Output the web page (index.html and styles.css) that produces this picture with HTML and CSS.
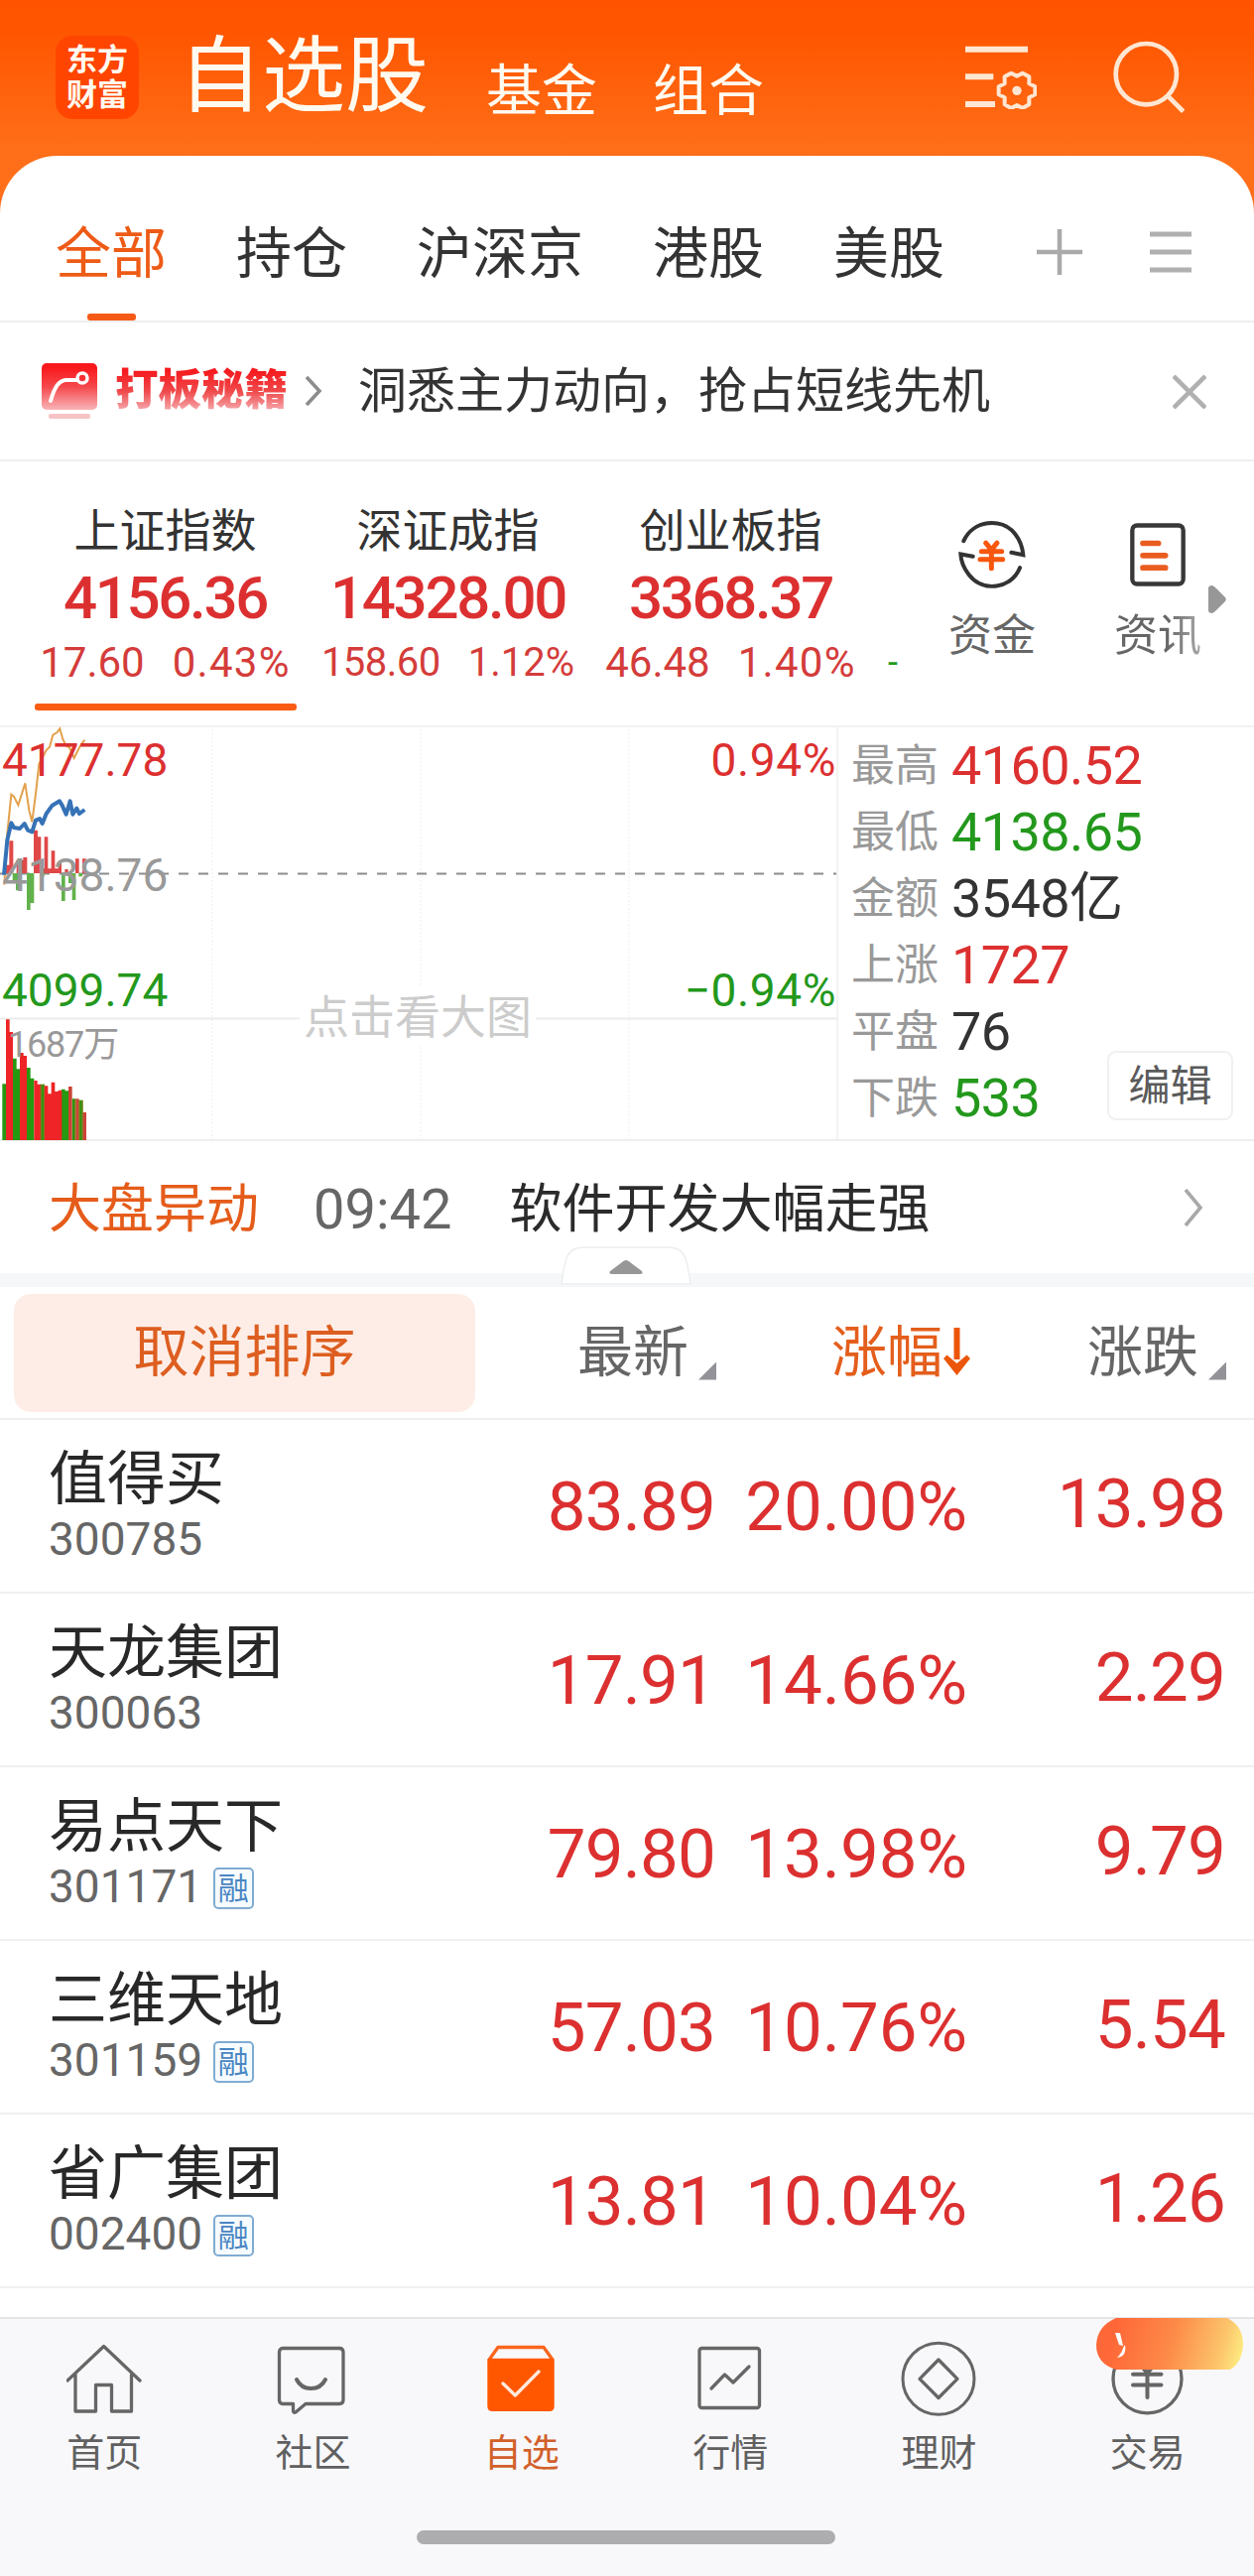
FILE: index.html
```html
<!DOCTYPE html>
<html lang="zh-CN">
<head>
<meta charset="utf-8">
<title>自选股</title>
<link rel="stylesheet" href="styles.css">
</head>
<body>
<div class="app">
  <header class="topbar">
    <div class="logo"><span>东方</span><span>财富</span></div>
    <h1 class="topbar-title">自选股</h1>
    <span class="topbar-link">基金</span>
    <span class="topbar-link">组合</span>
    <svg class="icon-manage" viewBox="39 46 216 192" fill="none" stroke="#ffe6d2">
      <path d="M39 57H228M39 140H124M39 223H129" stroke-width="18"/>
      <path d="M250 170V194L232 203 232 224 212 235 195 226 178 235 158 224 158 203 140 194V170L158 161 158 140 178 129 195 138 212 129 232 140 232 161Z" stroke-width="12" stroke-linejoin="round"/>
      <circle cx="195" cy="182" r="14" fill="#ffe6d2" stroke="none"/>
    </svg>
    <svg class="icon-search" viewBox="485 29 216 219" fill="none" stroke="#ffe6d2" stroke-width="14">
      <circle cx="585" cy="130" r="92"/>
      <path d="M650 196L697 243"/>
    </svg>
  </header>

  <main class="sheet">
    <nav class="tabs">
      <span class="tab tab-active">全部</span>
      <span class="tab">持仓</span>
      <span class="tab">沪深京</span>
      <span class="tab">港股</span>
      <span class="tab">美股</span>
      <svg class="icon-plus" viewBox="0 0 46 46" stroke="#aaa" stroke-width="4.5"><path d="M0 23H46M23 0V46"/></svg>
      <svg class="icon-menu" viewBox="0 0 42 42" stroke="#b0b0b0" stroke-width="5"><path d="M0 3H42M0 21H42M0 39H42"/></svg>
    </nav>

    <section class="promo">
      <svg class="promo-icon" viewBox="0 0 56 56" fill="none">
        <defs><linearGradient id="promoFill" x1="0" y1="0" x2="0" y2="1"><stop offset="0.1" stop-color="#f9191c"/><stop offset="0.5" stop-color="#f5474a"/><stop offset="1" stop-color="#f8b4b8"/></linearGradient></defs>
        <rect x="0" y="0" width="56" height="47" rx="5" fill="url(#promoFill)"/>
        <path d="M9 38C13 24 17 18 24 17H36" stroke="#fff" stroke-width="4" stroke-linecap="round"/>
        <circle cx="41" cy="15" r="5" stroke="#fff" stroke-width="3.5"/>
        <rect x="7" y="51" width="42" height="5" rx="2" fill="#f7c3c6"/>
      </svg>
      <strong class="promo-name">打板秘籍</strong>
      <svg class="promo-arrow" viewBox="0 0 18 32" fill="none" stroke="#8c8c8c" stroke-width="3.6"><path d="M2 2L15 16 2 30"/></svg>
      <span class="promo-text">洞悉主力动向，抢占短线先机</span>
      <svg class="promo-close" viewBox="0 0 34 34" stroke="#b0b0b0" stroke-width="4.5"><path d="M1 1L33 33M33 1L1 33"/></svg>
    </section>

    <section class="indices">
      <div class="index index-active">
        <span class="index-name">上证指数</span>
        <span class="index-value">4156.36</span>
        <span class="index-change"><span>17.60</span><span class="pct">0.43%</span></span>
      </div>
      <div class="index">
        <span class="index-name">深证成指</span>
        <span class="index-value">14328.00</span>
        <span class="index-change index-change-tight"><span>158.60</span><span class="pct">1.12%</span></span>
      </div>
      <div class="index">
        <span class="index-name">创业板指</span>
        <span class="index-value">3368.37</span>
        <span class="index-change"><span>46.48</span><span class="pct">1.40%</span></span>
      </div>
      <div class="index-next">-</div>
      <div class="shortcut">
        <svg width="68" height="69" viewBox="80 42 204 206" fill="none" stroke="#333" stroke-width="12">
          <path d="M96 105C124 42 210 32 252 84C266 102 274 124 276 147L240 140M266 186C240 250 155 262 112 207C97 188 88 168 87 145L124 152" stroke-linecap="round" stroke-linejoin="miter"/>
          <path d="M163 111L180 132 197 111M150 137H211M146 161H214M180 132V188" stroke="#f8570e" stroke-width="15" stroke-linecap="round"/>
        </svg>
        <span>资金</span>
      </div>
      <div class="shortcut shortcut-fade">
        <svg width="56" height="69" viewBox="596 42 168 206" fill="none">
          <rect x="603" y="58" width="154" height="177" rx="14" stroke="#383838" stroke-width="13"/>
          <path d="M635 112H682M635 149H703M635 186H703" stroke="#ea5d20" stroke-width="17" stroke-linecap="round"/>
        </svg>
        <span>资讯</span>
      </div>
      <svg class="indices-more" viewBox="0 0 18 28" fill="#979797"><path d="M0 3Q0 0 4 0Q6 1 8 3L17 12Q18.500 14 17 16L8 25Q6 27 4 28Q0 28 0 25Z"/></svg>
    </section>

    <section class="market">
      <div class="chart">
        <svg class="chart-plot" viewBox="0 0 844 418" fill="none">
          <path d="M214 4V418M424 4V418M634 4V418" stroke="#eeeeee" stroke-width="1" stroke-dasharray="2 2"/>
          <path d="M0 295.500H844" stroke="#ececec" stroke-width="2"/>
          <path d="M0 149.500H844" stroke="#8c8c8c" stroke-width="2" stroke-dasharray="10 10"/>
          <g transform="scale(.333333) translate(0 -33)">
            <path fill="#e04848" d="M17 480V455H28V382H40V480M50 480V440H70V432H82V480M102 480V350H114V370H124V466H134V370H145V466H155V412H166V466H176V450H186V480M196 480V468H206V480M228 480V436H239V480M249 480V436H260V480Z"/>
            <path fill="#62b24b" d="M38 480V502H48V532H59V480M81 480V591H92V570H103V480M124 480V490H134V480M186 480V564H197V480M207 480V510H218V561H229V480M238 480V490H249V480Z"/>
            <path stroke="#e3a14c" stroke-width="6" d="M13 515L20 380 34 242 42 248 55 274 76 208 88 290 97 325 108 240 118 150 140 108 150 98 160 62 172 55 181 43 190 75 200 95 210 100 224 132 240 100 250 85 256 77"/>
            <path stroke="#3672b6" stroke-width="12" stroke-linejoin="round" d="M12 485L22 380 34 328 42 342 60 345 74 330 84 350 97 355 108 320 120 315 128 330 140 300 158 275 180 262 188 275 200 302 212 262 220 302 232 284 240 300 256 288"/>
            <path fill="#259a10" d="M7 1287V1117H18V1287M39 1287V1040H50V1072H60V1287M81 1287V1068H92V1100H103V1287M123 1287V1118H135V1287M186 1287V1133H197V1138H208V1287M218 1287V1162H229V1287M239 1287V1166H250V1287Z"/>
            <path fill="#ee2426" d="M18 1287V922H29V960H39V1287M60 1287V1023H71V1032H81V1287M103 1287V1107H113V1118H124V1287M134 1287V1123H145V1147H155V1112H166V1140H176V1136H187V1287Z"/>
            <path fill="#cb4334" d="M207 1287V1125H218V1287M229 1287V1162H239V1287M250 1287V1203H261V1287Z"/>
            <path stroke="#7f7a1c" stroke-width="4" d="M124 1118V1287M133 1118V1287M227 1162V1287M240 1166V1287M249 1166V1287"/>
          </g>
        </svg>
        <div class="chart-row up"><span>4177.78</span><span class="chart-pct">0.94%</span></div>
        <div class="chart-row flat"><span>4138.76</span></div>
        <div class="chart-row down"><span>4099.74</span><span class="chart-pct">−0.94%</span></div>
        <span class="chart-hint">点击看大图</span>
        <span class="chart-volume">1687万</span>
      </div>
      <div class="stats">
        <div class="stat"><span class="stat-label">最高</span><span class="up">4160.52</span></div>
        <div class="stat"><span class="stat-label">最低</span><span class="down">4138.65</span></div>
        <div class="stat"><span class="stat-label">金额</span><span>3548亿</span></div>
        <div class="stat"><span class="stat-label">上涨</span><span class="up">1727</span></div>
        <div class="stat"><span class="stat-label">平盘</span><span>76</span></div>
        <div class="stat"><span class="stat-label">下跌</span><span class="down">533</span></div>
        <span class="edit">编辑</span>
      </div>
    </section>

    <section class="news">
      <span class="news-tag">大盘异动</span>
      <span class="news-time">09:42</span>
      <span class="news-text">软件开发大幅走强</span>
      <svg class="news-arrow" viewBox="0 0 20 38" fill="none" stroke="#a8a8a8" stroke-width="3.600"><path d="M2 1L17 19 2 37"/></svg>
    </section>
    <div class="divider">
      <svg class="divider-handle" viewBox="0 0 132 40">
        <path d="M1 38C3 24 4 14 8 8C12 2 18 1 26 1H106C114 1 120 2 124 8C128 14 129 24 131 38Z" fill="#fff" stroke="#eceef0" stroke-width="1.500"/>
        <path d="M66 14Q68 14 70 16L82 25Q84 28 80 28H52Q48 28 50 25L62 16Q64 14 66 14Z" fill="#979797"/>
      </svg>
    </div>

    <section class="quotes">
      <div class="quote-head">
        <span class="unsort">取消排序</span>
        <span class="head-cell">最新<i class="corner"></i></span>
        <span class="head-cell head-sorted">涨幅<svg class="sort-arrow" viewBox="0 0 27 48"><path d="M10.500 0H16.500V32H10.500ZM0 31L3.500 27.500 13.500 36 23.500 27.500 27 31 13.500 48Z" fill="#ec560a"/></svg></span>
        <span class="head-cell">涨跌<i class="corner"></i></span>
      </div>
      <div class="quote"><div class="stock"><span class="stock-name">值得买</span><span class="stock-code">300785</span></div><span class="num">83.89</span><span class="num num-pct">20.00%</span><span class="num num-diff">13.98</span></div>
      <div class="quote"><div class="stock"><span class="stock-name">天龙集团</span><span class="stock-code">300063</span></div><span class="num">17.91</span><span class="num num-pct">14.66%</span><span class="num num-diff">2.29</span></div>
      <div class="quote"><div class="stock"><span class="stock-name">易点天下</span><span class="stock-code">301171<b class="margin-tag">融</b></span></div><span class="num">79.80</span><span class="num num-pct">13.98%</span><span class="num num-diff">9.79</span></div>
      <div class="quote"><div class="stock"><span class="stock-name">三维天地</span><span class="stock-code">301159<b class="margin-tag">融</b></span></div><span class="num">57.03</span><span class="num num-pct">10.76%</span><span class="num num-diff">5.54</span></div>
      <div class="quote"><div class="stock"><span class="stock-name">省广集团</span><span class="stock-code">002400<b class="margin-tag">融</b></span></div><span class="num">13.81</span><span class="num num-pct">10.04%</span><span class="num num-diff">1.26</span></div>
    </section>
  </main>

  <footer class="dock">
    <nav class="dock-items">
      <span class="dock-item">
        <svg viewBox="0 0 76 76"><path d="M1 40L37.600 5.500 74 40M9 34V71H29.500V44.500H45.500V71H65.500V34"/></svg>首页
      </span>
      <span class="dock-item">
        <svg viewBox="0 0 76 76"><path d="M8 7.500H65Q69 7.500 69 11.500V59.500Q69 63.500 65 63.500H31L21 72Q18.500 73 18.500 70V63.500H8Q4.500 63.500 4.500 59.500V11.500Q4.500 7.500 8 7.500Z"/><path d="M22 39C28 51 45 51 51 39" stroke-width="4"/></svg>社区
      </span>
      <span class="dock-item dock-active">
        <svg viewBox="0 0 76 76"><path d="M5 19L14 6.500H60L69 19" stroke="#f9651c"/><path d="M3.300 20Q3.300 17.700 6 17.700H68Q70.700 17.700 70.700 20V66Q70.700 71 65.700 71H8.300Q3.300 71 3.300 66Z" fill="#ff5600" stroke="none"/><path d="M19 43L31.300 55 55 31" stroke="#ffe9dc"/></svg>自选
      </span>
      <span class="dock-item">
        <svg viewBox="0 0 76 76"><rect x="7" y="7.500" width="60.500" height="60" rx="2.500"/><path d="M19 48L32.500 34 41 42 57 26"/></svg>行情
      </span>
      <span class="dock-item">
        <svg viewBox="0 0 76 76"><circle cx="38" cy="38.300" r="36" stroke-width="3"/><path d="M38 19L57 38.300 38 57.500 19 38.300Z"/></svg>理财
      </span>
      <span class="dock-item">
        <svg viewBox="0 0 76 76"><circle cx="37.500" cy="38.300" r="34.500"/><path d="M23 33.700H51.500M23 44.500H51.500M37.500 57V33.700M27 20L37.500 32.500 48 20" stroke-width="4"/></svg>交易
        <svg class="dock-badge" viewBox="0 0 148 52">
          <defs><linearGradient id="badgeFill" x1="0" y1="0.500" x2="1" y2="0.600"><stop offset="0.100" stop-color="#fe6838"/><stop offset="0.500" stop-color="#fd8a48"/><stop offset="0.860" stop-color="#fcc56c"/><stop offset="1" stop-color="#fdeb80"/></linearGradient></defs>
          <path d="M20 0H132Q148 8 148 27Q147 45 135 52H20Q0 46 0 27Q1 8 20 0Z" fill="url(#badgeFill)"/>
          <path d="M19 15H24L27 28 23 27ZM29 27Q31 39 21 40Q26 35 27 30Z" fill="#fff"/>
        </svg>
      </span>
    </nav>
    <div class="home-bar"></div>
  </footer>
</div>
</body>
</html>
```
FILE: styles.css
```css
* { box-sizing: border-box; }

body {
  margin: 0;
  font-family: Roboto, "Noto Sans CJK SC", sans-serif;
  color: #333;
}

svg { display: block; flex: none; }

.app {
  display: flex;
  flex-direction: column;
  width: 1264px;
  height: 2596px;
  overflow: hidden;
  background: linear-gradient(#ff5300 0, #ff5500 30px, #ff6e18 150px, #ff701c 240px);
}

.up { color: #dc3030; }
.down { color: #23981c; }

/* Top bar */
.topbar {
  display: flex;
  align-items: center;
  flex: none;
  height: 157px;
  padding: 0 70px 2px 56px;
  color: #fffaf0;
}
.logo {
  display: flex;
  flex-direction: column;
  align-items: center;
  justify-content: center;
  width: 84px;
  height: 84px;
  border-radius: 17px;
  background: #ff4500;
  font-size: 31px;
  font-weight: 700;
  line-height: 35px;
}
.topbar-title {
  margin: 0 0 0 40px;
  font-size: 84px;
  font-weight: 400;
  line-height: 90px;
}
.topbar-link {
  margin: 28px 0 0 58px;
  font-size: 56px;
  line-height: 60px;
}
.topbar-link + .topbar-link { margin-left: 56px; }
.icon-manage { width: 72px; height: 64px; margin-left: auto; }
.icon-search { width: 72px; height: 73px; margin-left: 77px; }

/* White sheet */
.sheet {
  display: flex;
  flex-direction: column;
  flex: 1;
  border-radius: 58px 58px 0 0;
  background: #fff;
}

.tabs {
  display: flex;
  gap: 70px;
  height: 168px;
  padding-left: 56px;
  border-bottom: 2px solid #eeeeee;
}
.tab {
  display: flex;
  flex-direction: column;
  align-items: center;
  padding-top: 71px;
  font-size: 56px;
  line-height: 56px;
}
.tab-active { color: #ee5b16; }
.tab-active::after {
  content: "";
  width: 49px;
  height: 7px;
  margin-top: 32px;
  border-radius: 3px;
  background: #f55a16;
}
.icon-plus { width: 46px; height: 46px; margin: 74px 0 0 23px; }
.icon-menu { width: 42px; height: 42px; margin: 76px 0 0 -2px; }

.promo {
  display: flex;
  align-items: center;
  height: 140px;
  padding-left: 42px;
  border-bottom: 2px solid #eeeeee;
}
.promo-icon { width: 56px; height: 56px; }
.promo-name {
  margin-left: 18px;
  font-size: 43.5px;
  font-weight: 900;
  line-height: 50px;
  color: transparent;
  background: linear-gradient(#f51a1e 10%, #f0484a 50%, #f6b6ba 95%);
  background-clip: text;
  -webkit-background-clip: text;
}
.promo-arrow { width: 18px; height: 32px; margin-left: 17px; }
.promo-text { margin: 2px 0 0 36px; font-size: 49px; line-height: 60px; }
.promo-close { width: 34px; height: 34px; margin: 2px 48px 0 auto; }

/* Index strip */
.indices {
  position: relative;
  display: flex;
  height: 266px;
  padding: 40px 0 0 24px;
}
.index {
  display: flex;
  flex-direction: column;
  align-items: center;
  width: 285px;
}
.index-name { font-size: 46px; line-height: 60px; }
.index-value {
  margin-top: 3px;
  font-size: 60px;
  font-weight: 500;
  line-height: 70px;
  letter-spacing: -2.3px;
  color: #dc3030;
}
.index-change {
  display: flex;
  gap: 28px;
  margin-top: 5px;
  font-size: 42px;
  line-height: 50px;
  color: #d43c3a;
}
.index-change .pct { letter-spacing: 1.3px; }
.index-change-tight { font-size: 40px; letter-spacing: -0.5px; }
.index-change-tight .pct { letter-spacing: 0; }
.index-active::after {
  content: "";
  width: 264px;
  height: 7px;
  margin-top: 16px;
  border-radius: 3px;
  background: #f95c12;
}
.index-next {
  width: 37px;
  padding: 138px 0 0 16px;
  font-size: 36px;
  line-height: 50px;
  color: #23981c;
}
.shortcut {
  display: flex;
  flex-direction: column;
  align-items: center;
  gap: 23px;
  width: 168px;
  padding-top: 19px;
  font-size: 44px;
  line-height: 50px;
  color: #666;
}
.shortcut-fade { width: 166px; }
.shortcut-fade span {
  color: transparent;
  background: linear-gradient(90deg, #666 60%, #aaa);
  background-clip: text;
  -webkit-background-clip: text;
}
.indices-more { position: absolute; right: 28px; top: 125px; width: 18px; height: 28px; }

/* Intraday chart and statistics */
.market {
  display: flex;
  height: 419px;
  border-top: 2px solid #f2f2f2;
  border-bottom: 2px solid #eeeeee;
}
.chart {
  position: relative;
  display: flex;
  flex-direction: column;
  justify-content: space-between;
  width: 843px;
  padding: 3px 0 0 2px;
  height: 295px;
}
.chart-plot { position: absolute; left: 0; top: -2px; width: 844px; height: 418px; }
.chart-row {
  position: relative;
  display: flex;
  justify-content: space-between;
  height: 60px;
  font-size: 46px;
  line-height: 60px;
}
.chart-pct { letter-spacing: 0.6px; }
.flat { color: #999; }
.chart-hint {
  position: absolute;
  left: 302px;
  top: 262px;
  width: 238px;
  font-size: 46px;
  line-height: 60px;
  text-align: center;
  color: #ccc;
  background: #fff;
}
.chart-volume {
  position: absolute;
  left: 8px;
  top: 295px;
  font-size: 36px;
  line-height: 50px;
  letter-spacing: -1.2px;
  color: #999;
}
.stats {
  position: relative;
  flex: 1;
  padding: 5px 0 0 13px;
  border-left: 2px solid #f2f2f2;
}
.stat {
  display: flex;
  height: 67px;
  font-size: 54px;
  line-height: 67px;
  letter-spacing: -0.6px;
}
.stat-label {
  width: 101px;
  font-size: 44px;
  letter-spacing: 0;
  padding-top: 1px;
  color: #999;
}
.edit {
  position: absolute;
  right: 21px;
  bottom: 19px;
  width: 127px;
  height: 70px;
  border: 2px solid #f0f0f0;
  border-radius: 9px;
  font-size: 42px;
  line-height: 68px;
  text-align: center;
  color: #5a5a5a;
}

/* Market movement line */
.news {
  display: flex;
  align-items: center;
  height: 133px;
  padding: 4px 51px 0 49px;
  font-size: 53px;
  line-height: 60px;
}
.news-tag { color: #e55c1a; }
.news-time { margin-left: 55px; font-size: 56px; color: #666; }
.news-text { margin-left: 58px; color: #2b2b2b; }
.news-arrow { width: 20px; height: 38px; margin: -3px 0 0 auto; }
.divider { position: relative; height: 14px; background: #f5f7f9; }
.divider-handle { position: absolute; left: 565px; bottom: 1px; width: 132px; height: 40px; }

/* Quote table */
.quote-head, .quote {
  display: grid;
  grid-template-columns: 493px 229px 256px 258px;
  align-items: center;
  border-bottom: 2px solid #f0f0f0;
}
.quote-head { height: 134px; font-size: 56px; line-height: 64px; color: #666; }
.unsort {
  width: 465px;
  height: 119px;
  margin: 1px 0 0 14px;
  border-radius: 17px;
  background: #fdede6;
  line-height: 119px;
  text-align: center;
  color: #dd5e20;
}
.head-cell { display: flex; justify-content: flex-end; align-items: center; }
.head-sorted { color: #e45e1c; }
.corner {
  width: 18px;
  height: 18px;
  margin: 37px 0 0 10px;
  background: #929298;
  clip-path: polygon(100% 0, 100% 100%, 0 100%);
}
.sort-arrow { width: 27px; height: 48px; margin: -3px 0 0 1px; }

.quote { height: 175px; }
.stock { display: flex; flex-direction: column; margin-top: -3px; padding-left: 49px; }
.stock-name { font-size: 59px; line-height: 70px; color: #282828; }
.stock-code {
  display: flex;
  align-items: center;
  height: 50px;
  font-size: 46px;
  line-height: 50px;
  color: #666;
}
.margin-tag {
  width: 41px;
  height: 42px;
  margin: 4px 0 0 11px;
  border: 2px solid #7fabd2;
  border-radius: 5px;
  font-size: 31px;
  font-weight: 400;
  line-height: 39px;
  text-align: center;
  text-indent: -1px;
  color: #4a86c2;
  background: #f6fbff;
}
.num {
  margin-top: 3px;
  padding-right: 1px;
  font-size: 69px;
  line-height: 80px;
  letter-spacing: -0.8px;
  text-align: right;
  color: #dc3030;
}
.num-pct { padding-right: 3px; letter-spacing: 0; }
.num-diff { margin-top: -3px; }

/* Bottom dock */
.dock {
  display: flex;
  flex-direction: column;
  align-items: center;
  flex: none;
  height: 261px;
  border-top: 2px solid #e4e4e6;
  background: #f8f8fa;
}
.dock-items { display: flex; width: 1262px; margin-right: 2px; }
.dock-item {
  position: relative;
  display: flex;
  flex: 1;
  flex-direction: column;
  align-items: center;
  gap: 12px;
  padding-top: 22px;
  font-size: 38px;
  line-height: 50px;
  color: #606060;
}
.dock-item svg { width: 76px; height: 76px; fill: none; stroke: #666; stroke-width: 3.3; stroke-linejoin: round; stroke-linecap: round; }
.dock-active { color: #d2602a; }
.dock-item .dock-badge { position: absolute; left: 53px; top: -1px; width: 148px; height: 52px; stroke: none; }
.home-bar {
  width: 422px;
  height: 14px;
  margin: 53px 2px 0 0;
  border-radius: 7px;
  background: #adadaf;
}
```
